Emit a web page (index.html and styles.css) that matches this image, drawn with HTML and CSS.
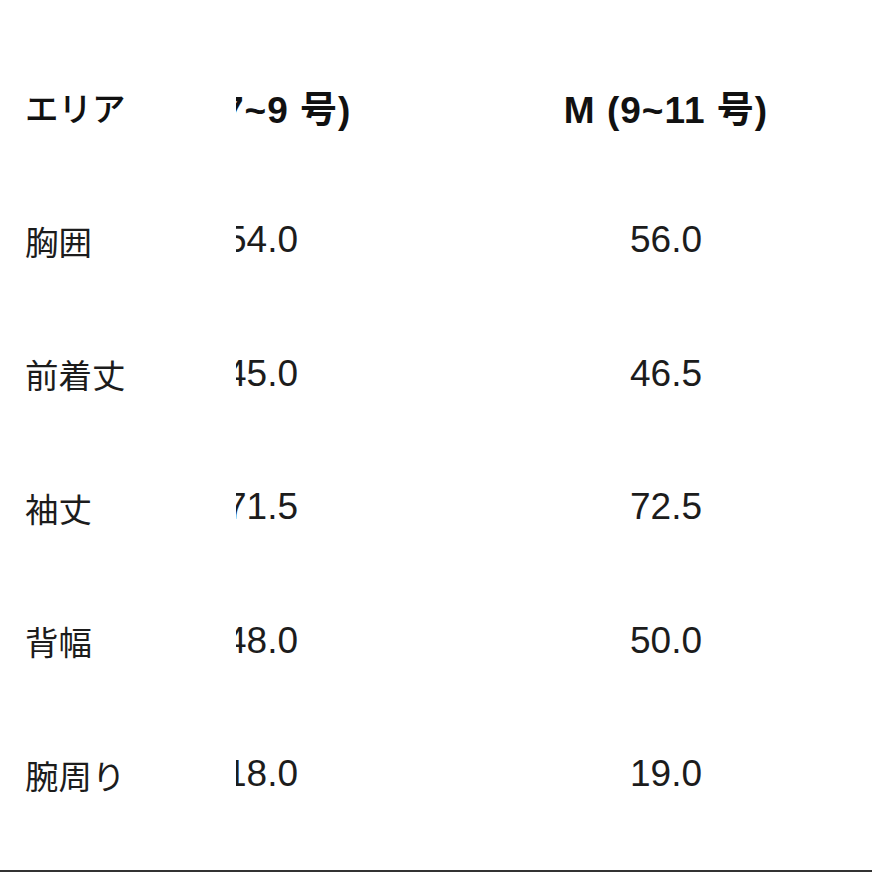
FILE: index.html
```html
<!DOCTYPE html>
<html lang="ja">
<head>
<meta charset="utf-8">
<title>サイズ表</title>
<link rel="stylesheet" href="styles.css">
</head>
<body>
<div class="sheet">
  <div class="scroller" id="scroller">
    <table class="size-table">
      <colgroup>
        <col class="col-area">
        <col class="col-size">
        <col class="col-size">
      </colgroup>
      <thead>
        <tr><th class="area">エリア</th><th>S (7~9 号)</th><th>M (9~11 号)</th></tr>
      </thead>
      <tbody>
        <tr><th class="area">胸囲</th><td>54.0</td><td>56.0</td></tr>
        <tr><th class="area">前着丈</th><td>45.0</td><td>46.5</td></tr>
        <tr><th class="area">袖丈</th><td>71.5</td><td>72.5</td></tr>
        <tr><th class="area">背幅</th><td>48.0</td><td>50.0</td></tr>
        <tr><th class="area">腕周り</th><td>18.0</td><td>19.0</td></tr>
      </tbody>
    </table>
  </div>
</div>
<script src="app.js"></script>
</body>
</html>
```
FILE: styles.css
```css
html, body {
  margin: 0;
  padding: 0;
  background: #fff;
}
body {
  font-family: "Liberation Sans", "Noto Sans CJK JP", sans-serif;
  color: #1c1c1c;
}
.sheet {
  height: 872px;
  box-sizing: border-box;
  padding-top: 40px;
  border-bottom: 2px solid #333;
  overflow: hidden;
}
.scroller {
  display: flex;
  overflow-x: auto;
  scrollbar-width: none;
}
.scroller::-webkit-scrollbar {
  display: none;
}
.size-table {
  flex: none;
  border-collapse: collapse;
  table-layout: fixed;
  width: 1044px;
  margin-right: 24px;
}
.col-area { width: 236px; }
.col-size { width: 404px; }
.size-table th,
.size-table td {
  height: 133.5px;
  padding: 0;
  text-align: center;
  vertical-align: middle;
  font-size: 37px;
  font-weight: 400;
}
.size-table thead th {
  font-weight: 700;
  color: #111;
  letter-spacing: 1px;
}
.size-table .area {
  position: sticky;
  left: 0;
  z-index: 1;
  background: #fff;
  text-align: left;
  padding-left: 25px;
  font-weight: 400;
  font-size: 33.5px;
  letter-spacing: 0;
}
.size-table thead .area {
  font-weight: 500;
}
```
FILE: app.js
```js
document.getElementById('scroller').scrollLeft = 176;
```
